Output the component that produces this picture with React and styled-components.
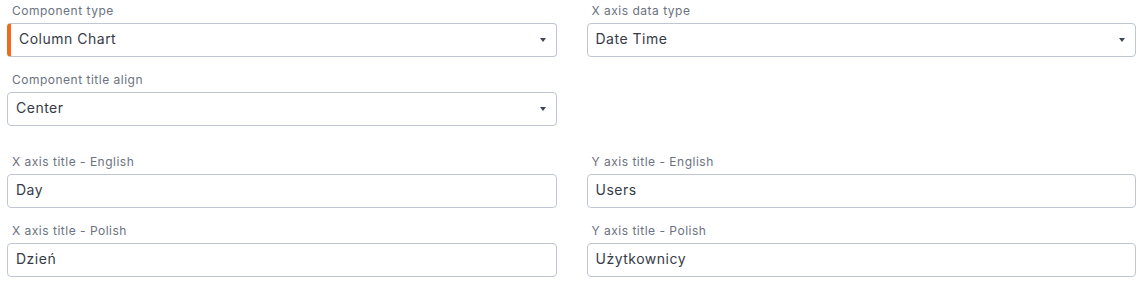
import styled, { createGlobalStyle } from 'styled-components'

const GlobalStyle = createGlobalStyle`
    body {
        margin: 0;
        background: #ffffff;
        font-family: Inter, "Noto Sans", sans-serif;
    }
`;

const Form = styled.div`
    display: flex;
    flex-direction: column;
    gap: 27px;
    padding: 2px 10px 0 7px;
`;

const Section = styled.div`
    display: grid;
    grid-template-columns: 1fr 1fr;
    column-gap: 30px;
    row-gap: 14px;
`;

const Field = styled.div`
    display: flex;
    flex-direction: column;
`;

const Label = styled.label`
    font-size: 12px;
    line-height: 18px;
    letter-spacing: 0.5px;
    color: #6b7280;
    padding-left: 5px;
    margin-bottom: 3px;
`;

const Box = styled.div`
    position: relative;
    height: 34px;
    box-sizing: border-box;
    display: flex;
    align-items: center;
    border: 1px solid #bfc6d1;
    border-left: ${({ $accent }) => ($accent ? '4px solid #f26b1d' : '1px solid #bfc6d1')};
    border-radius: 4px;
    padding: 0 28px 3px 8px;
    font-size: 14px;
    letter-spacing: 0.5px;
    color: #363b47;
    background: #fff;
`;

const Caret = styled.span`
    position: absolute;
    right: 10px;
    top: 50%;
    margin-top: -2px;
    width: 0;
    height: 0;
    border-left: 3.5px solid transparent;
    border-right: 3.5px solid transparent;
    border-top: 4px solid #3f4653;
`;

const Select = ({ label, value, accent }) => (
    <Field>
        <Label>{label}</Label>
        <Box $accent={accent}>
            {value}
            <Caret />
        </Box>
    </Field>
);

const Input = ({ label, value }) => (
    <Field>
        <Label>{label}</Label>
        <Box>{value}</Box>
    </Field>
);

const App = () => {
    return (
        <>
            <GlobalStyle />
            <Form>
                <Section>
                    <Select label="Component type" value="Column Chart" accent />
                    <Select label="X axis data type" value="Date Time" />
                    <Select label="Component title align" value="Center" />
                </Section>
                <Section>
                    <Input label="X axis title - English" value="Day" />
                    <Input label="Y axis title - English" value="Users" />
                    <Input label="X axis title - Polish" value="Dzień" />
                    <Input label="Y axis title - Polish" value="Użytkownicy" />
                </Section>
            </Form>
        </>
    )
}

export default App
